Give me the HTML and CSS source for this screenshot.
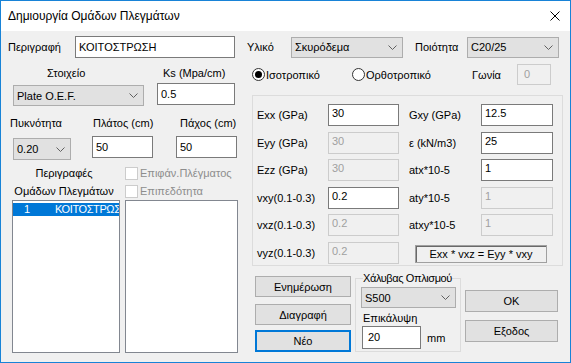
FILE: index.html
```html
<!DOCTYPE html>
<html lang="el">
<head>
    <meta charset="UTF-8">
    <meta name="viewport" content="width=device-width, initial-scale=1.0">
    <title>Δημιουργία Ομάδων Πλεγμάτων</title>
    <link rel="stylesheet" href="styles.css">
</head>
<body>
    <div class="window">
        <div class="titlebar">
            <span class="title">Δημιουργία Ομάδων Πλεγμάτων</span>
            <svg class="close" viewBox="0 0 10 10"><path d="M0.5 0.5 L9.5 9.5 M9.5 0.5 L0.5 9.5" stroke="#000" stroke-width="1" fill="none"/></svg>
        </div>

        <div class="row-top">
            <span class="lbl lbl-desc">Περιγραφή</span>
            <div class="edit w-desc">ΚΟΙΤΟΣΤΡΩΣΗ</div>
            <span class="lbl lbl-mat">Υλικό</span>
            <div class="combo w-mat">Σκυρόδεμα<svg viewBox="0 0 9 5"><path d="M0.5 0.5 L4.5 4.5 L8.5 0.5"/></svg></div>
            <span class="lbl lbl-qual">Ποιότητα</span>
            <div class="combo w-qual">C20/25<svg viewBox="0 0 9 5"><path d="M0.5 0.5 L4.5 4.5 L8.5 0.5"/></svg></div>
        </div>

        <div class="main">
            <div class="left">
                <div class="labels-a">
                    <span class="lbl-elem">Στοιχείο</span>
                    <span>Ks (Mpa/cm)</span>
                </div>
                <div class="ctrls-a">
                    <div class="combo w-elem">Plate O.E.F.<svg viewBox="0 0 9 5"><path d="M0.5 0.5 L4.5 4.5 L8.5 0.5"/></svg></div>
                    <div class="edit w-ks">0.5</div>
                </div>
                <div class="labels-b">
                    <span class="lbl-dens">Πυκνότητα</span>
                    <span class="lbl-width">Πλάτος (cm)</span>
                    <span>Πάχος (cm)</span>
                </div>
                <div class="ctrls-b">
                    <div class="combo w-dens">0.20<svg viewBox="0 0 9 5"><path d="M0.5 0.5 L4.5 4.5 L8.5 0.5"/></svg></div>
                    <div class="edit w-width">50</div>
                    <div class="edit w-thick">50</div>
                </div>
                <div class="lists">
                    <div class="list-col list-names">
                        <div class="list-head caption">Περιγραφές<br>Ομάδων Πλεγμάτων</div>
                        <div class="listbox">
                            <div class="list-item selected"><span class="item-no">1</span><span class="item-name">ΚΟΙΤΟΣΤΡΩΣ</span></div>
                        </div>
                    </div>
                    <div class="list-col list-opts">
                        <div class="list-head">
                            <div class="check"><span class="check-box"></span>Επιφάν.Πλέγματος</div>
                            <div class="check"><span class="check-box"></span>Επιπεδότητα</div>
                        </div>
                        <div class="listbox"></div>
                    </div>
                </div>
            </div>

            <div class="right">
                <div class="radios">
                    <div class="radio r-iso"><span class="radio-dot checked"></span>Ισοτροπικό</div>
                    <div class="radio r-ortho"><span class="radio-dot"></span>Ορθοτροπικό</div>
                    <span class="lbl lbl-angle">Γωνία</span>
                    <div class="edit off w-angle">0</div>
                </div>

                <div class="params">
                    <span>Exx (GPa)</span><div class="edit top w-p1">30</div>
                    <span>Gxy (GPa)</span><div class="edit top w-p2">12.5</div>
                    <span>Eyy (GPa)</span><div class="edit top off w-p1">30</div>
                    <span>ε (kN/m3)</span><div class="edit top w-p2">25</div>
                    <span>Ezz (GPa)</span><div class="edit top off w-p1">30</div>
                    <span>atx*10-5</span><div class="edit top w-p2">1</div>
                    <span>vxy(0.1-0.3)</span><div class="edit top w-p1">0.2</div>
                    <span>aty*10-5</span><div class="edit top off w-p2">1</div>
                    <span>vxz(0.1-0.3)</span><div class="edit top off w-p1">0.2</div>
                    <span>atxy*10-5</span><div class="edit top off w-p2">1</div>
                    <span>vyz(0.1-0.3)</span><div class="edit top off w-p1">0.2</div>
                    <div class="formula">Exx * vxz = Eyy * vxy</div>
                </div>

                <div class="bottom">
                    <div class="btn-col">
                        <div class="btn b-update">Ενημέρωση</div>
                        <div class="btn b-delete">Διαγραφή</div>
                        <div class="btn default b-new">Νέο</div>
                    </div>
                    <fieldset class="steel">
                        <legend>Χάλυβας Οπλισμού</legend>
                        <div class="combo w-steel">S500<svg viewBox="0 0 9 5"><path d="M0.5 0.5 L4.5 4.5 L8.5 0.5"/></svg></div>
                        <div class="lbl-cover">Επικάλυψη</div>
                        <div class="cover-row">
                            <div class="edit w-cover">20</div>
                            <span>mm</span>
                        </div>
                    </fieldset>
                    <div class="btn-col ok-col">
                        <div class="btn b-ok">OK</div>
                        <div class="btn b-exit">Εξοδος</div>
                    </div>
                </div>
            </div>
        </div>
    </div>
</body>
</html>
```

FILE: styles.css
```css
* {
    box-sizing: border-box;
}
body {
    margin: 0;
    font-family: "Liberation Sans", Arial, sans-serif;
    font-size: 11px;
    color: #000;
    background: #ffffff;
}
.window {
    width: 571px;
    height: 363px;
    border: 1px solid #1883d7;
    background: #f0f0f0;
    display: flex;
    flex-direction: column;
}
.titlebar {
    height: 30px;
    flex-shrink: 0;
    background: #ffffff;
    display: flex;
    align-items: center;
    justify-content: space-between;
    padding: 0 10px 0 7px;
    font-size: 12px;
}
.close {
    width: 10px;
    height: 10px;
}

/* controls */
.lbl {
    white-space: nowrap;
    flex-shrink: 0;
}
.edit {
    height: 22px;
    flex-shrink: 0;
    border: 1px solid #7a7a7a;
    background: #ffffff;
    padding: 0 3px;
    line-height: 20px;
    white-space: nowrap;
    overflow: hidden;
}
.edit.top {
    line-height: 17px;
}
.edit.off {
    border-color: #cccccc;
    background: #f0f0f0;
    color: #a0a0a0;
}
.combo {
    height: 21px;
    flex-shrink: 0;
    border: 1px solid #adadad;
    background: #e1e1e1;
    display: flex;
    align-items: center;
    justify-content: space-between;
    padding: 0 5px 0 3px;
    white-space: nowrap;
}
.combo svg {
    width: 9px;
    height: 5px;
    fill: none;
    stroke: #606060;
    stroke-width: 1;
}
.btn {
    height: 21px;
    border: 1px solid #adadad;
    background: #e1e1e1;
    display: flex;
    align-items: center;
    justify-content: center;
}
.btn.default {
    border: 2px solid #0078d7;
}

/* top row */
.row-top {
    display: flex;
    align-items: center;
    height: 22px;
    margin-top: 5px;
    padding-left: 7px;
}
.lbl-desc { width: 67px; }
.w-desc { width: 160px; }
.lbl-mat { width: 44px; margin-left: 12px; }
.w-mat { width: 112px; }
.lbl-qual { width: 52px; margin-left: 12px; }
.w-qual { width: 92px; }

.main {
    display: flex;
    flex: 1;
}

/* left side */
.left {
    width: 246px;
    flex-shrink: 0;
}
.labels-a {
    display: flex;
    height: 14px;
    line-height: 14px;
    margin-top: 8px;
}
.lbl-elem {
    margin-left: 46px;
    width: 116px;
}
.ctrls-a {
    display: flex;
    align-items: flex-start;
    margin-top: 3px;
}
.w-elem { width: 131px; margin: 2px 0 0 12px; }
.w-ks { width: 78px; margin-left: 13px; }
.labels-b {
    display: flex;
    height: 14px;
    line-height: 14px;
    margin-top: 10px;
}
.lbl-dens { margin-left: 9px; width: 83px; }
.lbl-width { width: 87px; }
.ctrls-b {
    display: flex;
    align-items: flex-start;
    margin-top: 6px;
}
.w-dens { width: 58px; height: 22px; margin: 2px 0 0 12px; }
.w-width { width: 61px; margin-left: 21px; }
.w-thick { width: 61px; margin-left: 23px; }

.lists {
    display: flex;
    margin-top: 4px;
}
.list-names {
    width: 108px;
    margin-left: 11px;
}
.list-opts {
    width: 113px;
    margin-left: 5px;
}
.list-head {
    height: 36px;
    line-height: 18px;
}
.caption {
    text-align: center;
    padding-right: 4px;
}
.listbox {
    height: 153px;
    border: 1px solid #828790;
    background: #ffffff;
    padding-top: 1px;
    overflow: hidden;
}
.list-item {
    height: 13px;
    line-height: 13px;
    display: flex;
    white-space: nowrap;
    margin-top: 1px;
}
.list-item.selected {
    background: #0078d7;
    color: #ffffff;
}
.item-no {
    width: 42px;
    padding-left: 11px;
    flex-shrink: 0;
}
.item-name {
    letter-spacing: -0.4px;
}
.check {
    display: flex;
    align-items: center;
    height: 18px;
    color: #8d8d8d;
}
.check-box {
    width: 13px;
    height: 13px;
    border: 1px solid #cccccc;
    background: #ffffff;
    margin-right: 2px;
}

/* right side */
.right {
    flex: 1;
}
.radios {
    display: flex;
    align-items: center;
    height: 21px;
    margin-top: 6px;
    padding-left: 5px;
}
.radio {
    display: flex;
    align-items: center;
    white-space: nowrap;
}
.r-iso { width: 100px; }
.r-ortho { width: 120px; }
.radio-dot {
    width: 13px;
    height: 13px;
    border: 1px solid #333333;
    border-radius: 50%;
    background: #ffffff;
    margin-right: 1px;
    display: flex;
    align-items: center;
    justify-content: center;
}
.radio-dot.checked::after {
    content: "";
    width: 7px;
    height: 7px;
    border-radius: 50%;
    background: #000000;
}
.lbl-angle { width: 45px; }
.w-angle { width: 34px; height: 21px; line-height: 19px; padding-left: 6px; }

.params {
    width: 311px;
    height: 171px;
    margin: 10px 0 0 5px;
    border: 1px solid #dcdcdc;
    padding: 8px 0 0 4px;
    display: grid;
    grid-template-columns: 71px 81px 72px 72px;
    grid-auto-rows: 22px;
    row-gap: 5.6px;
    align-items: center;
    align-content: start;
}
.w-p1 { width: 71px; }
.w-p2 { width: 72px; }
.formula {
    grid-column: 3 / 5;
    width: 132px;
    height: 18px;
    margin: 2px 0 0 6px;
    border: 1px solid #a0a0a0;
    box-shadow: inset 1px 1px 0 #696969;
    text-align: center;
    line-height: 16px;
}

.bottom {
    display: flex;
    align-items: flex-start;
}
.btn-col {
    width: 96px;
    margin-left: 8px;
}
.b-update { margin-top: 10px; }
.b-delete { margin-top: 7px; }
.b-new { margin-top: 5px; height: 22px; }
.steel {
    width: 104px;
    height: 81px;
    margin: 5px 0 0 4px;
    padding: 0 4px 0 5px;
    border: 1px solid #dcdcdc;
}
.steel legend {
    padding: 0;
    margin-left: 2px;
    line-height: 14px;
    white-space: nowrap;
    letter-spacing: -0.4px;
}
.w-steel { width: 95px; margin-top: 2px; }
.lbl-cover {
    height: 14px;
    line-height: 14px;
    margin: 3px 0 0 2px;
}
.cover-row {
    display: flex;
    align-items: center;
    margin-top: 1px;
}
.w-cover { width: 59px; height: 23px; margin-left: 1px; margin-right: 6px; padding-left: 5px; }
.ok-col {
    width: 93px;
    margin-left: 4px;
}
.b-ok { margin-top: 24px; height: 22px; }
.b-exit { margin-top: 8px; height: 22px; }
```
